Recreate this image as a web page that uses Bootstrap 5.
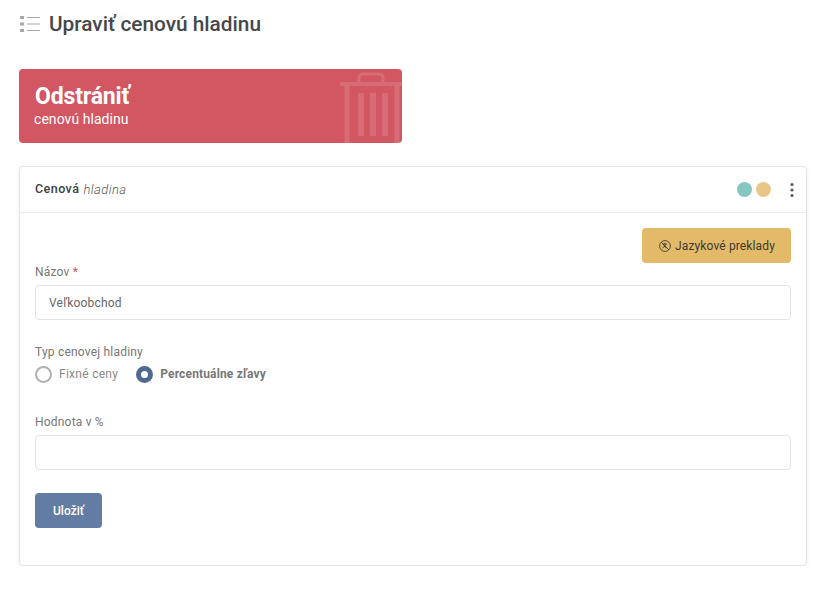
<!DOCTYPE html>
<html lang="sk">
<head>
  <meta charset="UTF-8">
  <meta name="viewport" content="width=device-width, initial-scale=1.0">
  <title>Upraviť cenovú hladinu</title>
  <link rel="stylesheet" href="https://cdn.jsdelivr.net/npm/bootstrap@5.3.0/dist/css/bootstrap.min.css">
  <style>
    body { background: #fff; font-family: Roboto, sans-serif; font-size: 12px; color: #555; letter-spacing: .2px; }
    .page-wrap { padding: 12px 23px 0 19px; }
    .page-head { height: 24px; gap: 8px; margin-bottom: 33px; }
    .page-head h1 { font-size: 20.8px; font-weight: 500; color: #45474b; margin: 0; letter-spacing: 0; }
    .del-tile { width: 383px; height: 74px; background: #d25763; border-radius: 4px; color: #fff; padding: 14px 15px; overflow: hidden; position: relative; margin-bottom: 23px; }
    .del-tile strong { display: block; font-size: 23px; font-weight: 700; line-height: 28px; letter-spacing: -.15px; padding-left: 1px; }
    .del-tile span { display: block; font-size: 14px; line-height: 17px; letter-spacing: .05px; font-weight: 400; }
    .del-icon { position: absolute; left: 321px; top: 3px; }
    .form-box { border: 1px solid #e3e4e6; border-radius: 4px; box-shadow: 0 1px 4px rgba(0,0,0,.07); height: 400px; }
    .form-box-head { height: 46px; padding: 0 15px; border-bottom: 1px solid #ebebec; }
    .box-title { font-size: 12.5px; font-weight: 500; color: #3d3f43; letter-spacing: .45px; }
    .box-sub { font-size: 13px; font-style: italic; font-weight: 300; color: #555; margin-left: 1px; letter-spacing: .45px; }
    .dot-teal, .dot-sand { width: 15px; height: 15px; border-radius: 50%; }
    .dot-teal { background: #85c6c0; }
    .dot-sand { background: #e9c685; }
    .more-dots { margin-left: 14px; margin-right: -4px; }
    .form-box-body { padding: 15px 15px 0; }
    .lang-btn { background: #e3ba68; border: 0; height: 35px; width: 149px; border-radius: 4px; color: #3d3a33; font-size: 12px; padding: 0 0 0 1px; letter-spacing: .13px; }
    .lang-btn:hover { background: #e3ba68; color: #333; }
    .field-label { display: block; margin: 0 0 6px; line-height: 15px; color: #777; }
    .req { color: #d25763; }
    .field-input { height: 35px; font-size: 12px; color: #666; padding: 0 13px; border: 1px solid #e2e3e5; border-radius: 4px; letter-spacing: .2px; }
    .name-label { margin-top: 2px; margin-bottom: 5px; }
    .type-label { margin-top: 25px; margin-bottom: 4px; }
    .value-label { margin-top: 31px; margin-bottom: 5px; }
    .radio-row { gap: 18px; height: 20px; }
    .radio-opt { gap: 7px; color: #888; letter-spacing: .28px; }
    .radio-off, .radio-on { width: 17px; height: 17px; border-radius: 50%; display: block; }
    .radio-off { border: 2px solid #aeb0b3; }
    .radio-on { border: 5px solid #4f6a90; background: #fff; }
    .radio-opt.picked { color: #777; font-weight: 700; letter-spacing: .15px; }
    .save-btn { background: #627ca3; border: 0; width: 67px; height: 35px; color: #fff; font-size: 12px; font-weight: 500; border-radius: 4px; padding: 0; margin-top: 23px; }
    .save-btn:hover { background: #627ca3; color: #fff; }
  </style>
</head>
<body>
  <div class="page-wrap">
    <div class="page-head d-flex align-items-center">
      <svg width="22" height="18" viewBox="0 0 22 18" fill="none">
        <g fill="#a3a5a8"><rect x="1" y="1" width="4" height="3" rx=".8"/><rect x="1" y="7.5" width="4" height="3" rx=".8"/><rect x="1" y="14" width="4" height="3" rx=".8"/></g>
        <g stroke="#a3a5a8" stroke-width="1"><path d="M8 2.5h13M8 9h13M8 15.5h13"/></g>
      </svg>
      <h1>Upraviť cenovú hladinu</h1>
    </div>

    <div class="del-tile">
      <strong>Odstrániť</strong>
      <span>cenovú hladinu</span>
      <svg class="del-icon" width="62" height="71" viewBox="0 0 62 71" fill="none" stroke="#fff" stroke-opacity=".13">
        <path d="M0 12h62" stroke-width="4"/>
        <path d="M19 10V6q0-4 4-4h16q4 0 4 4v4" stroke-width="3"/>
        <path d="M7 14v57M57 14v57" stroke-width="5"/>
        <path d="M21 21v43M33 21v43M45 21v43" stroke-width="6"/>
      </svg>
    </div>

    <div class="form-box bg-white">
      <div class="form-box-head d-flex align-items-center">
        <span class="box-title">Cenová</span>
        <span class="box-sub ms-1">hladina</span>
        <div class="ms-auto d-flex align-items-center gap-1">
          <span class="dot-teal"></span>
          <span class="dot-sand"></span>
          <svg class="more-dots" width="6" height="16" viewBox="0 0 6 16" fill="#55585c"><circle cx="3" cy="2.5" r="1.6"/><circle cx="3" cy="8" r="1.6"/><circle cx="3" cy="13.5" r="1.6"/></svg>
        </div>
      </div>
      <div class="form-box-body">
        <div class="d-flex justify-content-end">
          <button type="button" class="btn lang-btn d-flex align-items-center justify-content-center gap-1">
            <svg width="12" height="12" viewBox="0 0 12 12" fill="none" stroke="#333" stroke-width=".8"><circle cx="6" cy="6" r="5.4"/><path d="M2.2 2.2l7.6 7.6M3.5 4h4.5M5.5 3v1M7 4Q6 7 3.5 8M4.5 5.5Q6 7.5 8 8"/></svg>
            Jazykové preklady
          </button>
        </div>
        <label class="field-label name-label" for="nazov">Názov <span class="req">*</span></label>
        <input id="nazov" type="text" class="form-control field-input" value="Veľkoobchod">

        <div class="field-label type-label">Typ cenovej hladiny</div>
        <div class="radio-row d-flex align-items-center">
          <div class="radio-opt d-flex align-items-center"><span class="radio-off"></span>Fixné ceny</div>
          <div class="radio-opt picked d-flex align-items-center"><span class="radio-on"></span>Percentuálne zľavy</div>
        </div>

        <label class="field-label value-label" for="hodnota">Hodnota v %</label>
        <input id="hodnota" type="text" class="form-control field-input">

        <button type="button" class="btn save-btn">Uložiť</button>
      </div>
    </div>
  </div>
  <script src="https://cdn.jsdelivr.net/npm/bootstrap@5.3.0/dist/js/bootstrap.bundle.min.js"></script>
</body>
</html>
